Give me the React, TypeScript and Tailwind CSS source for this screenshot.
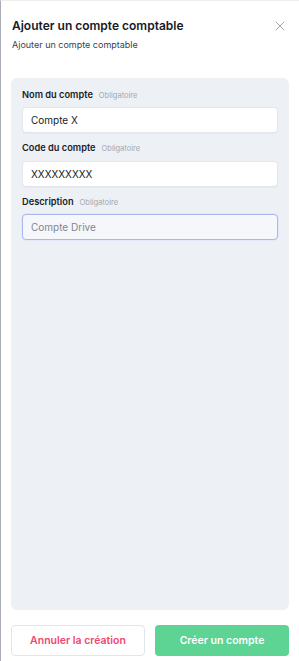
import { X } from "lucide-react"

interface FieldProps {
  label: string
  value?: string
  placeholder?: string
  focused?: boolean
}

function Field({ label, value, placeholder, focused }: FieldProps) {
  return (
    <div className="flex flex-col gap-[6px]">
      <div className="flex items-baseline gap-[6px]">
        <span className="text-[9.25px] leading-[13px] font-semibold text-[#1a1e2a]">{label}</span>
        <span className="text-[7.5px] text-[#a3a8b3]">Obligatoire</span>
      </div>
      <input
        readOnly
        value={value}
        placeholder={placeholder}
        className={`h-[26px] w-full rounded-[4px] px-[8px] text-[10px] outline-none ${
          focused
            ? "border border-[#a9b6f0] bg-[#f6f7fa] placeholder:text-[#7f858f] shadow-[0_0_0_1px_#e3e8fb]"
            : "border border-[#e3e6ec] bg-white text-[#161a24] shadow-[0_1px_1px_rgba(0,0,0,0.03)]"
        }`}
      />
    </div>
  )
}

export default function App() {
  return (
    <div className="flex h-screen w-full flex-col border-l border-l-[#a7abb3] border-t border-t-[#eeeeea] bg-white px-[10px] pb-[5px] font-['Inter',sans-serif]">
      <div className="flex items-start justify-between pt-[17px]">
        <div className="flex flex-col gap-[4px] pl-[1px]">
          <h2 className="text-[12px] font-semibold leading-[16px] text-[#161a26]">Ajouter un compte comptable</h2>
          <p className="text-[9px] leading-[13px] text-[#3b4150]">Ajouter un compte comptable</p>
        </div>
        <button className="mr-[1px] text-[#9aa0a8]">
          <X size={16} strokeWidth={1.4} />
        </button>
      </div>

      <div className="mt-[27px] flex flex-1 flex-col gap-[8px] rounded-[6px] bg-[#edf0f4] px-[11px] pt-[10px]">
        <Field label="Nom du compte" value="Compte X" />
        <Field label="Code du compte" value="XXXXXXXXX" />
        <Field label="Description" placeholder="Compte Drive" focused />
      </div>

      <div className="mt-[15px] grid grid-cols-2 gap-[10px]">
        <button className="h-[31px] rounded-[4px] border border-[#e2e5ea] bg-white text-[10.5px] font-semibold text-[#f0476e]">
          Annuler la création
        </button>
        <button className="h-[31px] rounded-[4px] bg-[#5dd394] text-[10.5px] font-semibold text-white">
          Créer un compte
        </button>
      </div>
    </div>
  )
}
